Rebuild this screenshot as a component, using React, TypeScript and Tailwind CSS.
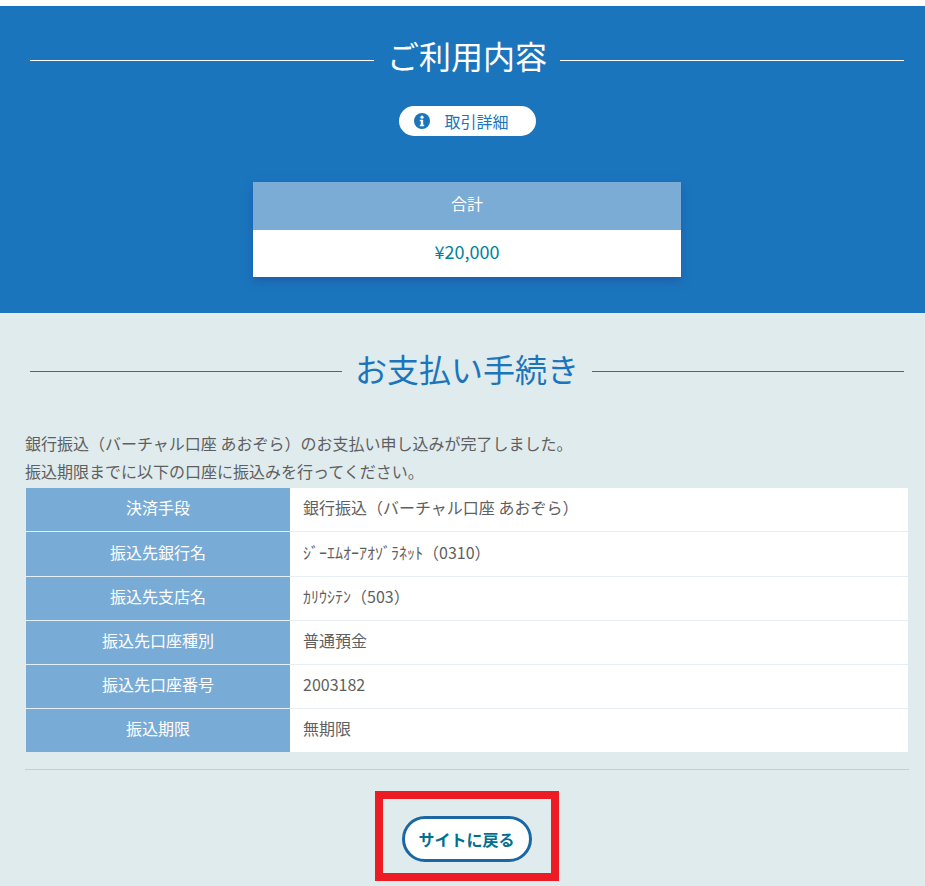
import React from "react";

const rows = [
    { label: "決済手段", value: "銀行振込（バーチャル口座 あおぞら）", h: "h-[44px]" },
    { label: "振込先銀行名", value: "ｼﾞｰｴﾑｵｰｱｵｿﾞﾗﾈｯﾄ（0310）", h: "h-[45px]" },
    { label: "振込先支店名", value: "ｶﾘｳｼﾃﾝ（503）", h: "h-[44px]" },
    { label: "振込先口座種別", value: "普通預金", h: "h-[44px]" },
    { label: "振込先口座番号", value: "2003182", h: "h-[44px]" },
    { label: "振込期限", value: "無期限", h: "h-[43px]" },
];

const fontStack = "font-['Noto_Sans_CJK_JP','Noto_Sans',sans-serif]";

export default function App() {
    return (
        <div className={`w-[925px] h-[886px] overflow-hidden bg-[#e0ebed] ${fontStack}`}>
            <div className="h-[6px] bg-white" />

            {/* Summary */}
            <section className="h-[307px] bg-[#1b75bc] px-[30px] pt-[30px] pr-[21px] text-white">
                <div className="flex items-center gap-[13px] h-[48px]">
                    <div className="h-px flex-1 bg-white" />
                    <h2 className="text-[32px] leading-[38px] font-normal h-[48px]">ご利用内容</h2>
                    <div className="h-px flex-1 bg-white" />
                </div>
                <div className="mt-[22px] flex justify-center">
                    <button className="h-[30px] w-[137px] rounded-full bg-white flex items-center pl-[15px] text-[#1b75bc] text-[16px]">
                        <svg width="16" height="16" viewBox="0 0 16 16" aria-hidden="true">
                            <circle cx="8" cy="8" r="8" fill="#1b75bc" />
                            <circle cx="8" cy="4.2" r="1.6" fill="#fff" />
                            <path d="M5.8 6.8h3.4v5h1v1.4H5.8v-1.4h1v-3.6h-1z" fill="#fff" />
                        </svg>
                        <span className="ml-[15px]">取引詳細</span>
                    </button>
                </div>
                <div className="mt-[46px] w-[428px] mx-auto shadow-[0_4px_8px_rgba(30,80,160,0.6)]">
                    <div className="h-[48px] bg-[#7aacd6] flex items-center justify-center text-[16px] pb-[6px]">合計</div>
                    <div className="h-[47px] bg-white flex items-center justify-center text-[18px] text-[#00829b] pb-[5px]">¥20,000</div>
                </div>
            </section>

            {/* Payment */}
            <section className="px-[25px] pr-[17px]">
                <div className="flex items-center gap-[13px] h-[48px] mt-[34px] ml-[5px] mr-[4px]">
                    <div className="h-px flex-1 bg-[#1b75bc]" />
                    <h2 className="text-[32px] leading-[42px] font-normal text-[#1b75bc] h-[48px]">お支払い手続き</h2>
                    <div className="h-px flex-1 bg-[#1b75bc]" />
                </div>

                <p className="mt-[34px] text-[16px] leading-[28px] text-[#5f5f5f]">
                    銀行振込（バーチャル口座 あおぞら）のお支払い申し込みが完了しました。
                    <br />
                    振込期限までに以下の口座に振込みを行ってください。
                </p>

                <div className="mt-[3px] ml-px">
                    {rows.map((row) => (
                        <div key={row.label} className={`flex ${row.h} border-b border-[#e6eff5] last:border-b-0 text-[16px]`}>
                            <div className="w-[264px] bg-[#78abd6] text-white flex items-center justify-center pb-[5px]">
                                {row.label}
                            </div>
                            <div className="flex-1 bg-white text-[#5f5f5f] flex items-center pl-[13px] pb-[5px]">{row.value}</div>
                        </div>
                    ))}
                </div>

                <div className="mt-[17px] h-px bg-[#c5cfd1] mr-[-1px]" />

                <div className="mt-[21px] flex justify-center">
                    <div className="w-[184px] h-[90px] border-[8px] border-[#ed1c24] flex items-center justify-center pt-[6px]">
                        <button className="w-[130px] h-[46px] rounded-full border-[3px] border-[#1a67a3] bg-white text-[#00708f] font-bold text-[16px]">
                            サイトに戻る
                        </button>
                    </div>
                </div>
            </section>
        </div>
    );
}
